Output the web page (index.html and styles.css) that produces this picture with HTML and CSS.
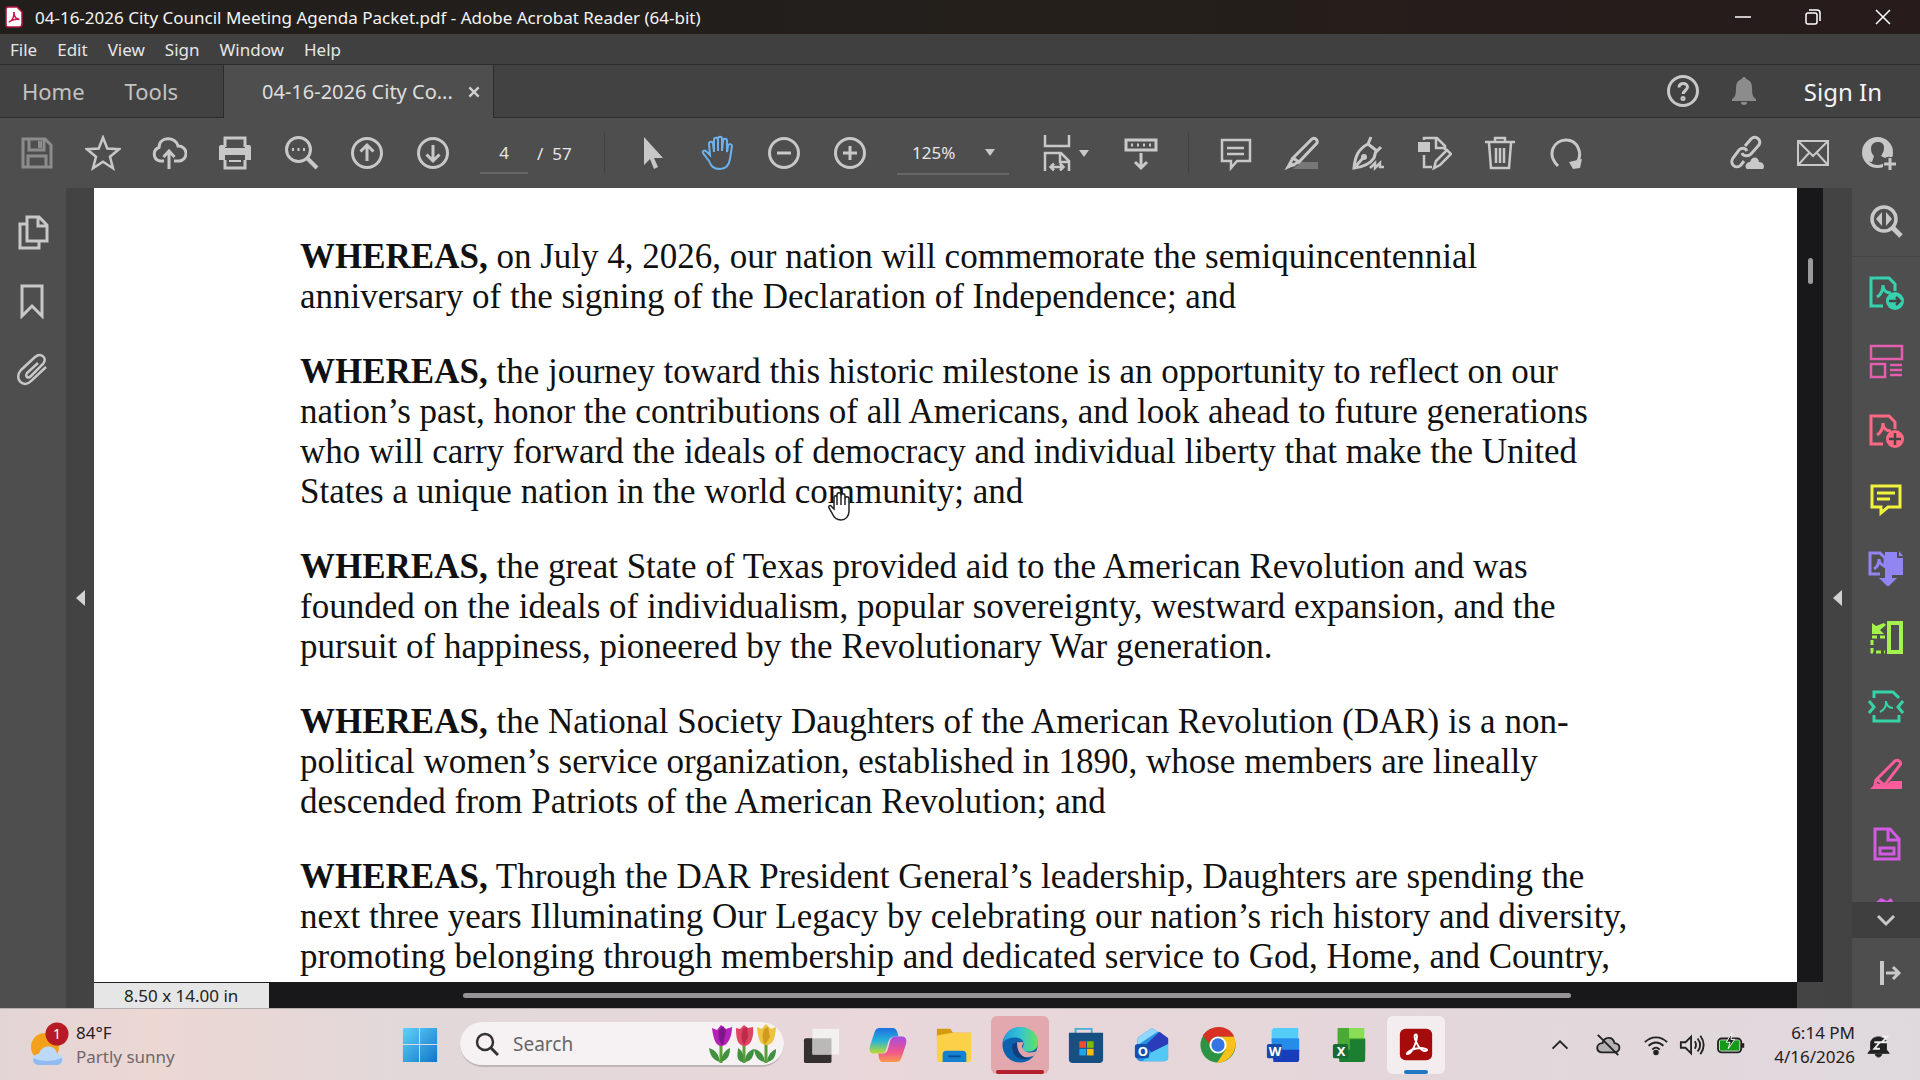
FILE: index.html
```html
<!DOCTYPE html>
<html lang="en">
<head>
<meta charset="utf-8">
<title>04-16-2026 City Council Meeting Agenda Packet.pdf</title>
<link rel="stylesheet" href="styles.css">
</head>
<body>
<header class="titlebar">
  <svg class="app-icon" viewBox="0 0 18 22"><path d="M3 1h9l5 5v12a3 3 0 0 1-3 3H3a2 2 0 0 1-2-2V3a2 2 0 0 1 2-2z" fill="#fff" stroke="#b3123c" stroke-width="1.5"/><path d="M4 16c3-1 5-5 5-10 0 5 2 7 5.500 7.500C10 12.500 7 13.500 4 16z" fill="none" stroke="#c8154a" stroke-width="1.500"/></svg>
  <h1 class="title">04-16-2026 City Council Meeting Agenda Packet.pdf - Adobe Acrobat Reader (64-bit)</h1>
  <div class="win-controls">
    <button class="win-btn" aria-label="Minimize"><svg viewBox="0 0 16 16"><path d="M0 8h16"/></svg></button>
    <button class="win-btn" aria-label="Restore"><svg viewBox="0 0 16 16"><rect x="1" y="4" width="11" height="11" rx="2"/><path d="M4 1h8a3 3 0 0 1 3 3v8"/></svg></button>
    <button class="win-btn" aria-label="Close"><svg viewBox="0 0 16 16"><path d="M1 1l14 14M15 1L1 15"/></svg></button>
  </div>
</header>
<nav class="menubar">
  <button>File</button><button>Edit</button><button>View</button><button>Sign</button><button>Window</button><button>Help</button>
</nav>
<div class="tabrow">
  <div class="tabs-left"><button class="tab-link">Home</button><button class="tab-link">Tools</button></div>
  <div class="tab-active"><span>04-16-2026 City Co...</span><button class="tab-close" aria-label="Close tab"><svg viewBox="0 0 12 12"><path d="M2 2l8 8M10 2l-8 8"/></svg></button></div>
  <div class="tabs-right">
    <button class="round" aria-label="Help"><svg class="ic" viewBox="0 0 36 36"><circle cx="18" cy="18" r="14.500"/><path d="M14 14.500c0-5.500 8.500-5 8.500-.5 0 3.500-4.300 3.500-4.300 7" stroke-width="3"/><circle cx="18" cy="25.500" r="1" /></svg></button>
    <button class="round dim" aria-label="Notifications"><svg class="ic" viewBox="0 0 36 36"><path class="f" d="M18 4a2 2 0 0 1 2 2c4 1 6 4 6 9 0 7 1 9 4 11v2H6v-2c3-2 4-4 4-11 0-5 2-8 6-9a2 2 0 0 1 2-2zM15 29h6a3 3 0 0 1-6 0z"/></svg></button>
    <button class="signin">Sign In</button>
  </div>
</div>
<div class="toolbar">
  <button class="tb dim" aria-label="Save"><svg class="ic" viewBox="0 0 36 36"><path d="M4 4h22l6 6v22H4zM10 4v11h15V4M9 32V21h18v11"/><path class="f" d="M19 6h4v7h-4z"/></svg></button>
  <button class="tb" aria-label="Star"><svg class="ic" viewBox="0 0 36 36"><path d="M18 2.500l4.300 11 11.700.7-9 7.500 3 11.500-10-6.500-10 6.500 3-11.500-9-7.500 11.700-.7z" stroke-width="2.500"/></svg></button>
  <button class="tb" aria-label="Upload"><svg class="ic" viewBox="0 0 36 36"><path d="M13 26H9a7 7 0 0 1-1-13.500C8 1 25 1 27 11a7.500 7.500 0 0 1 1 15h-5M18 34V17M12.500 22l5.500-6 5.500 6"/></svg></button>
  <button class="tb" aria-label="Print"><svg class="ic" viewBox="0 0 36 36"><path d="M8 12V3h20v9M8 25v8h20v-8" /><path class="f" fill-rule="evenodd" d="M4 10h4v3h20v-3h4a2 2 0 0 1 2 2v13H28v-5H8v5H2V12a2 2 0 0 1 2-2zM12 25h12v2H12z"/></svg></button>
  <button class="tb" aria-label="Find"><svg class="ic" viewBox="0 0 36 36"><circle cx="15.500" cy="14.500" r="12"/><path d="M24 23l10 10" stroke-width="4"/><path d="M9 14.500h2M14.500 14.500h2M20 14.500h2"/></svg></button>
  <button class="tb" aria-label="Previous page"><svg class="ic" viewBox="0 0 36 36"><circle cx="18" cy="18" r="14.500"/><path d="M18 26V11M11.500 16.500L18 10l6.500 6.500"/></svg></button>
  <button class="tb" aria-label="Next page"><svg class="ic" viewBox="0 0 36 36"><circle cx="18" cy="18" r="14.500"/><path d="M18 10v15M11.500 19.500L18 26l6.500-6.500"/></svg></button>
  <div class="pager"><input aria-label="Page number" value="4"><span>/&nbsp; 57</span></div>
  <i class="vsep"></i>
  <button class="tb" aria-label="Select"><svg class="ic" viewBox="0 0 36 36"><path class="f" d="M10 2v28l6-6 4 10 4-2-4-9h9z"/></svg></button>
  <button class="tb blue" aria-label="Hand"><svg class="ic" viewBox="0 0 36 36"><path d="M10 20L9 9c0-3 4-3 4 0l1 8V5c0-3 4-3 4 0v11V4c0-3 4-3 4 0v12l1-10c0-3 4-3 4 0v11l1-6c1-3 4-2 4 0l-2 13c-1 6-4 10-10 10-7 0-9-3-11-8L3 18c-1-3 2-3 4-1z" stroke-width="2"/></svg></button>
  <button class="tb" aria-label="Zoom out"><svg class="ic" viewBox="0 0 36 36"><circle cx="18" cy="18" r="14.500"/><path d="M11 18h14"/></svg></button>
  <button class="tb" aria-label="Zoom in"><svg class="ic" viewBox="0 0 36 36"><circle cx="18" cy="18" r="14.500"/><path d="M11 18h14M18 11v14"/></svg></button>
  <div class="zoombox"><select aria-label="Zoom level"><option>125%</option></select><i class="caret"></i></div>
  <button class="tb fit" aria-label="Page fit"><svg class="ic" viewBox="0 0 36 36"><path d="M6 0v11h24V0M6 36V18h16l8 8v10M21 18v9h9M12 32h12M15 28.500L11.500 32l3.500 3.500M21 28.500l3.500 3.500-3.500 3.500" stroke-width="2.500"/></svg><i class="caret"></i></button>
  <button class="tb" aria-label="Keyboard scroll"><svg class="ic" viewBox="0 0 36 36"><path d="M3 5h30v10H3zM18 18v15M12 27l6 6 6-6"/><path d="M8 10h2M14 10h2M20 10h2M26 10h2"/></svg></button>
  <i class="vsep"></i>
  <button class="tb" aria-label="Comment"><svg class="ic" viewBox="0 0 36 36"><path d="M4 5h28v21H19l-6 7v-7H4zM9 13h17M9 19h17" stroke-width="2.500"/></svg></button>
  <button class="tb" aria-label="Highlight"><svg class="ic" viewBox="0 0 36 36"><path class="shade" d="M17 27h17v7H9z"/><path d="M28 4c3-2 6 1 5 4L15 27l-6-4zM9 23l-5 9 11-5"/><path class="f" d="M2 33l5-6 5 4z"/></svg></button>
  <button class="tb" aria-label="Sign"><svg class="ic" viewBox="0 0 36 36"><path d="M21 2l-3 7 9 7 4-4M18 9C8 14 5 22 4 33c9-1 16-4 20-10l2-7M5 32l8-9"/><circle cx="14" cy="22" r="1.500"/><path d="M20 33l5-5v5l5-5v4h4" stroke-width="2.500"/></svg></button>
  <button class="tb" aria-label="Edit"><svg class="ic" viewBox="0 0 36 36"><path class="f" d="M2 7h12v10H2z"/><path d="M8 5V3h13l8 8v4M20 4v9h8M8 20v12h8M18 33l2-7 11-11 4 4-11 11z" stroke-width="2.500"/></svg></button>
  <button class="tb" aria-label="Delete"><svg class="ic" viewBox="0 0 36 36"><path d="M3 7h30M13 7V3h10v4M7 8l2 25h18l2-25M14 13v15M18 13v15M22 13v15" stroke-width="2.500"/></svg></button>
  <button class="tb" aria-label="Rotate"><svg class="ic" viewBox="0 0 36 36"><path d="M10 31C-2 19 6 5 18 5s17 14 11 23"/><path class="f" d="M21 27l13-3-2 9-7 1z"/></svg></button>
  <div class="tb-right">
    <button class="tb" aria-label="Share link"><svg class="ic" viewBox="0 0 36 36"><path d="M16 11l6-7c4-4 11 0 8 6l-8 9c-3 3-8 2-9-1M18 16c-2-4-6-3-8-1l-6 8c-4 6 3 12 8 7l3-4"/><path class="f" d="M18 34c-3-2-1-7 3-7 2-7 9-5 9 0 5 0 6 5 4 7z"/></svg></button>
    <button class="tb" aria-label="Email"><svg class="ic" viewBox="0 0 36 36"><path d="M3 6h30v24H3zM4 7l14 14L32 7M4 29l10-11M32 29L22 18" stroke-width="2"/></svg></button>
    <button class="tb" aria-label="Account"><svg class="ic" viewBox="0 0 36 36"><circle cx="16.500" cy="17.500" r="14"/><path class="f" d="M11 27l-6-1C0 15 5 3 16 3c13 0 16 10 14 18l-6 2-4-2c4-5 5-14-3-14-9 0-8 10-4 14z"/><path d="M29 22v13M22 29h13" stroke="#4e4e4e" stroke-width="7"/><path d="M29 23v12M23 29h12"/></svg></button>
  </div>
</div>
<main class="work">
  <aside class="leftpane">
    <button class="side" aria-label="Page thumbnails"><svg class="ic" viewBox="0 0 36 36"><path d="M12 3h12l8 8v16H12zM23 4v8h8M11 10H5v24h19v-6"/></svg></button>
    <button class="side" aria-label="Bookmarks"><svg class="ic" viewBox="0 0 36 36"><path d="M7 3h20v30l-10-10L7 33z"/></svg></button>
    <button class="side" aria-label="Attachments"><svg class="ic" viewBox="0 0 36 36"><path d="M23 11L12 21c-2 4 1 6 4 3l12-12c5-6-2-12-8-7L6 18C-2 27 9 37 16 29l15-14" stroke-width="2.500"/></svg></button>
  </aside>
  <button class="strip left" aria-label="Collapse navigation"><i class="tri"></i></button>
  <section class="viewer">
    <div class="row-top">
      <article class="page">
        <p><b>WHEREAS,</b> on July 4, 2026, our nation will commemorate the semiquincentennial<br>anniversary of the signing of the Declaration of Independence; and</p>
        <p><b>WHEREAS,</b> the journey toward this historic milestone is an opportunity to reflect on our<br>nation’s past, honor the contributions of all Americans, and look ahead to future generations<br>who will carry forward the ideals of democracy and individual liberty that make the United<br>States a unique nation in the world community; and</p>
        <p><b>WHEREAS,</b> the great State of Texas provided aid to the American Revolution and was<br>founded on the ideals of individualism, popular sovereignty, westward expansion, and the<br>pursuit of happiness, pioneered by the Revolutionary War generation.</p>
        <p><b>WHEREAS,</b> the National Society Daughters of the American Revolution (DAR) is a non-<br>political women’s service organization, established in 1890, whose members are lineally<br>descended from Patriots of the American Revolution; and</p>
        <p><b>WHEREAS,</b> Through the DAR President General’s leadership, Daughters are spending the<br>next three years Illuminating Our Legacy by celebrating our nation’s rich history and diversity,<br>promoting belonging through membership and dedicated service to God, Home, and Country,</p>
        <svg class="cursor" viewBox="0 0 24 30"><path d="M7 18V7c0-3 3-3 3 0v7V4c0-3 4-3 4 0v10V5c0-3 4-3 4 0v9-6c0-3 4-3 4 0v12c0 5-3 9-8 9-4 0-7-2-9-7l-3-5c-1-3 2-3 3-1z" fill="#fff" stroke="#222" stroke-width="1.500"/></svg>
      </article>
      <div class="vscroll"><i></i></div>
    </div>
    <div class="row-bottom"><span class="size">8.50 x 14.00 in</span><div class="hscroll"><i></i></div><div class="corner"></div></div>
  </section>
  <button class="strip right" aria-label="Collapse tools"><i class="tri"></i></button>
  <aside class="rightpane">
    <button class="side first" aria-label="Search tools"><svg class="ic" viewBox="0 0 36 36"><circle cx="16" cy="15" r="12" stroke-width="3.500"/><path d="M25 24l8 8" stroke-width="5"/><path class="f" d="M14 8v14l-6-7zM18 8v14l6-7z"/></svg></button>
    <div class="tools">
      <button class="side" aria-label="Export PDF"><svg class="ic c1" viewBox="0 0 36 36"><path d="M15 32H3V4h18l6 6v7M9 23c5-3 6-8 6-12 0 5 3 8 8 8"/><circle class="f" cx="27" cy="27" r="9"/><path d="M21 27h11M28 23l4 4-4 4" stroke="#444" stroke-width="2.500"/></svg></button>
      <button class="side" aria-label="Organize pages"><svg class="ic c2" viewBox="0 0 36 36"><path d="M3 3h31v13H3zM3 21h14v13H3zM22 22h12M22 27h12M22 32h12" stroke-width="2.500"/></svg></button>
      <button class="side" aria-label="Create PDF"><svg class="ic c3" viewBox="0 0 36 36"><path d="M15 32H3V4h18l6 6v7M9 23c5-3 6-8 6-12 0 5 3 8 8 8"/><circle class="f" cx="27" cy="27" r="9"/><path d="M21 27h12M27 21v12" stroke="#444" stroke-width="2.500"/></svg></button>
      <button class="side" aria-label="Comment tool"><svg class="ic c4" viewBox="0 0 36 36"><path d="M4 5h28v21H20l-7 6v-6H4zM9 12h18M9 18h13"/></svg></button>
      <button class="side" aria-label="Combine files"><svg class="ic c5" viewBox="0 0 36 36"><path class="f" d="M17 2h12v6h6v17H24v3h5l-9 9-9-9h6zM31 1l4 5h-4z"/><path d="M12 24H2V3h10l5 5v10M6 19c5-3 5-7 5-10 0 4 2 6 6 7"/></svg></button>
      <button class="side" aria-label="Rotate pages"><svg class="ic c6" viewBox="0 0 36 36"><path d="M21 4h12v29H21z" stroke-width="4"/><path d="M17 18H4v15h13" stroke-dasharray="5 3"/><path class="f" d="M4 4l4 3 8-3 2 2-6 5 4 4-12 0z"/></svg></button>
      <button class="side" aria-label="Compress PDF"><svg class="ic c7" viewBox="0 0 36 36"><path d="M6 10V4h19l6 6M6 27v6h25v-6M1 13l5 6-5 6M35 13l-5 6 5 6"/><path d="M12 24c6-3 6-7 6-11 0 4 3 7 7 7" stroke-width="2"/></svg></button>
      <button class="side" aria-label="Redact"><svg class="ic c8" viewBox="0 0 36 36"><path d="M27 4c3-2 7 1 5 4L16 29l-9-1 1-5zM9 22l7 6"/><path class="f" d="M3 31l5-5 9 3 6-5h11v8H2z"/></svg></button>
      <button class="side" aria-label="Prepare form"><svg class="ic c9" viewBox="0 0 36 36"><path d="M7 3h15l9 10v20H7zM20 4v10h10M12 22h14v6H12z"/></svg></button>
      <button class="side" aria-label="More tools"><svg class="ic c9" viewBox="0 0 36 36"><path class="f" d="M7 8l6-5 6 3 4-3 4 7-6 14z"/></svg></button>
    </div>
    <button class="more" aria-label="Scroll down"><svg class="ic" viewBox="0 0 36 36"><path d="M10 14l8 8 8-8"/></svg></button>
    <button class="side exit" aria-label="Open pane"><svg class="ic" viewBox="0 0 36 36"><path d="M14 6v24" stroke-width="4"/><path d="M18 18h13M25 12l6 6-6 6"/></svg></button>
  </aside>
</main>
<footer class="taskbar">
  <div class="weather">
    <svg class="w-icon" viewBox="0 0 40 46"><circle cx="15" cy="26" r="14" fill="#f3a01d"/><path d="M9 44c-9-1-8-11 0-11 2-10 17-10 18 0 8 0 8 10 0 11z" fill="#bcd9f7"/><path d="M9 44c-5 0-7-4-5-7 6 4 18 4 28 0 0 5-2 7-5 7z" fill="#90baf0"/><circle cx="27" cy="13" r="11.500" fill="#b51a25"/></svg>
    <span class="badge">1</span>
    <div class="w-text"><span>84°F</span><span class="muted">Partly sunny</span></div>
  </div>
  <div class="apps">
    <button class="app" aria-label="Start"><svg viewBox="0 0 40 40"><defs><linearGradient id="gw" x2="1" y2="1"><stop stop-color="#5fd2fa"/><stop offset="1" stop-color="#0f76c9"/></linearGradient></defs><path fill="url(#gw)" d="M3 2h16v17H2V3zM20 2h18v17H20zM2 20h17v18H2zM20 20h18v18H20z"/></svg></button>
    <label class="search"><svg class="mag" viewBox="0 0 24 24"><circle cx="10" cy="10" r="8" fill="none" stroke="#333" stroke-width="2.500"/><path d="M16 16l7 7" stroke="#333" stroke-width="3"/></svg><input placeholder="Search" aria-label="Search">
      <svg class="tulips" viewBox="0 0 70 40"><g fill="none" stroke="#5d9c38" stroke-width="3"><path d="M13 20v19M36 20v19M58 20v19"/></g><path fill="#3f9140" d="M12 38C4 36 2 30 1 24c7 2 10 7 11 14zM13 38c1-9 5-12 9-14 0 7-2 12-9 14zM35 38c-8-1-5-9-5-14 5 3 6 8 5 14zM37 38c0-7 3-11 9-13 0 8-3 12-9 13zM57 38c-7-1-10-6-11-13 6 1 10 6 11 13zM59 38c1-8 5-11 9-13 0 8-3 12-9 13z"/><path fill="#b720b5" d="M4 4l5 2 4-5 5 4 6-2c0 8-3 19-11 19C7 22 5 12 4 4z"/><path fill="#7e168c" d="M11 6l4-4 3 5-3 14c-4-2-5-8-4-15z"/><path fill="#df4563" d="M28 4l4 1 4-4 4 3 5-1c1 8-1 18-8 19-8 0-9-9-9-18z"/><path fill="#bd2a4c" d="M35 5l4-2 1 10-4 8c-3-5-3-10-1-16z"/><path fill="#ecc33e" d="M49 3l5 2 4-5 5 5 5-2c-1 10-2 18-10 18-7 0-8-9-9-18z"/><path fill="#d19c1d" d="M56 5l4-2 2 10-5 8c-3-5-3-10-1-16z"/></svg></label>
    <button class="app" aria-label="Task view"><svg viewBox="0 0 40 40"><rect x="1" y="13" width="29" height="26" rx="2" fill="#33302e"/><path d="M10 3h28v27H10z" fill="#f3f1f0"/><path d="M10 13h20v17H10z" fill="#bbb9b8"/></svg></button>
    <button class="app" aria-label="Copilot"><svg viewBox="0 0 40 40"><defs><linearGradient id="ga" x2="0" y2="1"><stop stop-color="#1e6fe0"/><stop offset=".5" stop-color="#27b2d8"/><stop offset="1" stop-color="#bfdb2c"/></linearGradient><linearGradient id="gb" x2="0" y2="1"><stop stop-color="#a54be0"/><stop offset=".6" stop-color="#f0558d"/><stop offset="1" stop-color="#f99a4c"/></linearGradient></defs><path fill="url(#ga)" d="M11 2h14c4 0 5 4 6 9h-4c-4 0-6 3-7 7l-2 7c-1 3-3 4-6 4H5c-4 0-5-4-4-8L6 6c1-3 3-4 5-4z"/><path fill="url(#gb)" d="M29 38H15c-4 0-5-4-5-9h4c4 0 5-2 6-5l2-8c1-3 3-5 6-5h7c4 0 5 4 4 8l-5 15c-1 3-3 4-5 4z"/></svg></button>
    <button class="app" aria-label="File Explorer"><svg viewBox="0 0 40 40"><path fill="#d69a11" d="M2 3h14l3 4h18v8H2z"/><path fill="#fdd04a" d="M2 10l16-3h20v28a3 3 0 0 1-3 3H4a2 2 0 0 1-2-2z"/><path fill="#1580cf" d="M8 38V30a4 4 0 0 1 4-4h17a4 4 0 0 1 4 4v8z"/><path stroke="#0a4e94" stroke-width="2" d="M14 32h13"/></svg></button>
    <button class="app on edge" aria-label="Edge"><svg viewBox="0 0 40 40"><defs><linearGradient id="ge" x2="1"><stop stop-color="#1e9de0"/><stop offset=".5" stop-color="#35c3d2"/><stop offset="1" stop-color="#63e35b"/></linearGradient></defs><circle cx="20" cy="20" r="18.500" fill="#0d62ad"/><path fill="url(#ge)" d="M2 17C5 5 12 1 20 1c12 0 19 8 19 16 0 7-5 10-11 10-5 0-6-3-5-5 3-5-1-10-8-10-6 0-10 2-13 5z"/><path d="M17 17c-5 10 4 20 18 14l4-6c-3 4-16 5-17-4l2-4z" fill="#e0a3a9"/><path d="M12 19c-2 12 8 20 21 14-9 3-17-5-16-16z" fill="#123f7b"/></svg></button>
    <button class="app" aria-label="Store"><svg viewBox="0 0 40 40"><path d="M9 8V3h17v5" fill="none" stroke="#49aed8" stroke-width="2"/><path fill="#174f80" d="M2 7h36v28a4 4 0 0 1-4 4H6a4 4 0 0 1-4-4z"/><path fill="#ee4e28" d="M13 16h7v7h-7z"/><path fill="#7fba00" d="M21 16h7v7h-7z"/><path fill="#1fa5ee" d="M13 24h7v7h-7z"/><path fill="#ffba08" d="M21 24h7v7h-7z"/></svg></button>
    <button class="app" aria-label="Outlook"><svg viewBox="0 0 40 40"><path fill="#2394e4" d="M5 12L20 2l17 11v20a4 4 0 0 1-4 4H8a4 4 0 0 1-4-4z"/><path fill="#8fd8fa" d="M5 12L20 2l6 4L5 20z"/><path fill="#2b3cba" d="M28 6l9 7v6L20 28l-8-7z"/><path fill="#53c8f4" d="M19 28l18-9v14a4 4 0 0 1-4 4H10z"/><rect x="2" y="19" width="15" height="15" rx="3" fill="#154fae"/></svg><b class="letter">O</b></button>
    <button class="app" aria-label="Chrome"><svg viewBox="0 0 40 40"><circle cx="20" cy="20" r="18.500" fill="#2d9344"/><path fill="#fbc116" d="M20 11h17c5 14-5 28-18 28l9-14z"/><path fill="#d93025" d="M4 10C13-3 32-1 37 11H20c-5 0-8 3-9 8z"/><circle cx="20" cy="20" r="9" fill="#fff"/><circle cx="20" cy="20" r="7" fill="#3574e3"/></svg></button>
    <button class="app" aria-label="Word"><svg viewBox="0 0 40 40"><path fill="#53cdf7" d="M9 2h26v14H7V5z"/><path fill="#258de9" d="M7 13h29v14H7z"/><path fill="#173dbb" d="M7 25h29v10a3 3 0 0 1-3 3H9z"/><rect x="2" y="19" width="16" height="15" rx="2" fill="#1848a8"/></svg><b class="letter">W</b></button>
    <button class="app" aria-label="Excel"><svg viewBox="0 0 40 40"><path fill="#88df56" d="M9 2h26v14H7V5z"/><path fill="#4aaa35" d="M7 13h29v14H7zM7 2h12v14H7z"/><path fill="#1b7e30" d="M7 25h29v10a3 3 0 0 1-3 3H9zM20 14h16v12H20z"/><rect x="2" y="19" width="16" height="15" rx="2" fill="#176b35"/></svg><b class="letter">X</b></button>
    <button class="app on acro" aria-label="Acrobat"><svg viewBox="0 0 40 40"><rect x="3" y="3" width="34" height="33" rx="6" fill="#a60b0b"/><path d="M20 9c-4 0 1 12 6 16 4 3 8 0 4-1-6-2-14 0-18 3-4 3 0 4 3 0 4-5 8-18 5-18z" fill="none" stroke="#fff" stroke-width="2"/></svg></button>
  </div>
  <div class="tray">
    <button aria-label="Hidden icons"><svg class="t16" viewBox="0 0 28 28"><path d="M6 18l8-8 8 8"/></svg></button>
    <button class="wide" aria-label="OneDrive"><svg viewBox="0 0 28 28"><path fill="#b5b2b3" d="M8 22c-8 0-7-10 0-10 2-7 11-8 13 0 8 1 6 10 0 10z"/><path d="M3 3l22 22"/></svg></button>
    <button aria-label="Wi-Fi"><svg viewBox="0 0 28 28"><path d="M2 11c7-7 17-7 24 0M6 15c5-5 11-5 16 0M10 19c3-3 5-3 8 0"/><circle cx="14" cy="22" r="2" fill="#222"/></svg></button>
    <button aria-label="Volume"><svg viewBox="0 0 28 28"><path d="M2 11h5l6-6v18l-6-6H2zM17 10c2 3 2 5 0 8M20 7c4 5 4 9 0 14M23 4c5 7 5 13 0 20"/></svg></button>
    <button class="bat" aria-label="Battery"><svg viewBox="0 0 32 28"><rect x="2" y="7" width="25" height="15" rx="4"/><path fill="#159b18" stroke="none" d="M4 9h21v11H4z"/><path d="M29 12v5" stroke-width="2.500"/><path d="M17 1l-6 10h4l-2 7 7-10h-4z" fill="#222" stroke="#fff" stroke-width="1"/></svg></button>
    <div class="clock"><span>6:14 PM</span><span>4/16/2026</span></div>
    <button class="bell" aria-label="Do not disturb"><svg viewBox="0 0 28 28"><path d="M5 19V12c0-9 17-9 17 0v7l3 4H2zM10 24h7c-1 4-6 4-7 0z" fill="#222" stroke-width="1"/><path d="M9 11h6l-6 7h6M17 5h6l-6 6h6" stroke="#eee"/></svg></button>
  </div>
</footer>
</body>
</html>
```
FILE: styles.css
```css
* { box-sizing: border-box; }
body {
  margin: 0;
  height: 100vh;
  display: flex;
  flex-direction: column;
  overflow: hidden;
  font-family: "Noto Sans", "Open Sans", sans-serif;
  font-size: 17px;
  color: #e6e6e6;
  background: #444;
}
button, input, select {
  font: inherit;
  color: inherit;
  background: none;
  border: 0;
  padding: 0;
  margin: 0;
}
svg { display: block; flex: none; }

.titlebar {
  height: 34px;
  display: flex;
  align-items: center;
  padding: 0 2px 0 5px;
  gap: 12px;
  background: linear-gradient(90deg, #211e1c, #241f1b 60%, #271b1b);
}
.app-icon { width: 18px; height: 24px; }
.title { margin: 0; font-size: 17px; font-weight: 400; color: #f4f4f4; }
.win-controls { margin-left: auto; display: flex; }
.win-btn { width: 70px; height: 34px; display: grid; place-items: center; }
.win-btn svg { width: 16px; height: 16px; fill: none; stroke: #fff; stroke-width: 1.500; }

.menubar {
  height: 31px;
  display: flex;
  align-items: center;
  gap: 20px;
  padding: 0 10px;
  background: #404040;
  border-bottom: 1px solid #2c2c2c;
}

.tabrow { height: 53px; display: flex; background: #424242; font-size: 20px; }
.tabs-left {
  width: 224px;
  display: flex;
  align-items: center;
  gap: 40px;
  padding-left: 22px;
  font-size: 22px;
  color: #c2c2c2;
  border-right: 1px solid #2c2c2c;
  border-bottom: 1px solid #2c2c2c;
}
.tab-active {
  width: 270px;
  display: flex;
  align-items: center;
  justify-content: space-between;
  padding: 0 12px 0 38px;
  background: #4e4e4e;
  color: #dedede;
  border-right: 1px solid #2c2c2c;
}
.tab-close svg { width: 14px; height: 14px; fill: none; stroke: #d0d0d0; stroke-width: 2; }
.tabs-right {
  flex: 1;
  display: flex;
  align-items: center;
  justify-content: flex-end;
  padding-right: 38px;
  border-bottom: 1px solid #2c2c2c;
}
.round { width: 61px; display: grid; place-items: center; }
.signin { margin-left: 29px; color: #f4f4f4; font-size: 24px; }

.ic { width: 36px; height: 36px; fill: none; stroke: #c8c8c8; stroke-width: 3; }
.ic .f { fill: #c8c8c8; stroke: none; }
.ic .shade { fill: #777; stroke: none; }
.dim .ic { stroke: #8c8c8c; }
.dim .ic .f { fill: #8c8c8c; }
.blue .ic { stroke: #6cb2ee; }

.toolbar { height: 70px; display: flex; align-items: center; padding: 0 8px 0 4px; background: #4e4e4e; }
.tb { width: 66px; height: 60px; display: flex; align-items: center; justify-content: center; flex: none; }
.pager { width: 124px; margin-left: 14px; display: flex; align-items: center; gap: 9px; }
.pager input { width: 48px; height: 42px; text-align: center; border-bottom: 2px solid #666; }
.vsep { width: 1px; height: 40px; background: #414141; margin-right: 14px; }
.zoombox { width: 112px; margin: 0 18px 0 14px; display: flex; align-items: center; border-bottom: 2px solid #666; }
.zoombox select { appearance: none; width: 88px; height: 42px; padding-left: 15px; }
.caret { border: 5px solid transparent; border-top: 7px solid #c8c8c8; border-bottom: 0; }
.fit { width: 74px; gap: 4px; }
.fit + .tb { margin-right: 14px; margin-left: 7px; }
.tb-right { margin-left: auto; display: flex; }

.work { flex: 1; min-height: 0; display: flex; }
.leftpane { width: 66px; padding-top: 9px; background: #4e4e4e; }
.side { width: 100%; height: 69px; display: grid; place-items: center; flex: none; }
.strip { width: 28px; background: #434343; display: grid; place-items: center; }
.strip.right { width: 29px; }
.tri { border: 8px solid transparent; border-right: 9px solid #d2d2d2; border-left: 0; }

.viewer { flex: 1; min-width: 0; display: flex; flex-direction: column; }
.row-top { flex: 1; min-height: 0; display: flex; }
.page {
  position: relative;
  flex: 1;
  overflow: hidden;
  padding: 49px 0 0 206px;
  background: #fff;
  color: #111;
  font-family: "Liberation Serif", serif;
  font-size: 35px;
  line-height: 40px;
  white-space: nowrap;
}
.page p { margin: 0 0 35px; }
.cursor { position: absolute; left: 733px; top: 303px; width: 24px; height: 30px; }
.vscroll { width: 26px; padding: 70px 0 0 11px; background: #18171a; }
.vscroll i { display: block; width: 5px; height: 26px; border-radius: 3px; background: #9a9a9a; }
.row-bottom { height: 26px; display: flex; color: #222; }
.size { width: 175px; line-height: 26px; padding-left: 30px; background: #e6e6e6; border-top: 1px solid #222; }
.hscroll { flex: 1; background: #18171a; display: flex; align-items: center; padding: 0 226px 0 194px; }
.hscroll i { flex: 1; height: 5px; border-radius: 3px; background: #969497; }
.corner { width: 26px; background: #444; }

.rightpane { width: 68px; display: flex; flex-direction: column; background: #4e4e4e; }
.first { border-bottom: 1px solid #454545; }
.tools { flex: 1; min-height: 0; overflow: hidden; }
.more { height: 36px; display: grid; place-items: center; background: #3f3f3f; }
.exit { height: 70px; }
.c1 { stroke: #36d2b0; } .c1 .f { fill: #36d2b0; }
.c2 { stroke: #e45fb0; }
.c3 { stroke: #fb6a82; } .c3 .f { fill: #fb6a82; }
.c4 { stroke: #f0f23c; }
.c5 { stroke: #9184f3; } .c5 .f { fill: #9184f3; }
.c6 { stroke: #a4f24c; } .c6 .f { fill: #a4f24c; }
.c7 { stroke: #36d2a8; }
.c8 { stroke: #f95d9c; } .c8 .f { fill: #f95d9c; }
.c9 { stroke: #d35be4; } .c9 .f { fill: #d35be4; }

.taskbar {
  height: 72px;
  display: flex;
  align-items: center;
  color: #242022;
  background: linear-gradient(90deg, #e3d5d6, #ecd7d3 8%, #e1d8da 22%, #e9d7da 45%, #e4d6da 70%, #dfd9dd);
  border-top: 1px solid #b7aeb0;
}
.weather { position: relative; width: 387px; padding-left: 30px; display: flex; gap: 6px; }
.w-icon { width: 40px; height: 46px; }
.badge { position: absolute; left: 53px; top: 3px; font-size: 14px; line-height: 20px; color: #fff; }
.w-text { display: flex; flex-direction: column; line-height: 24px; }
.muted { color: #70676a; }
.apps { display: flex; align-items: center; }
.app { position: relative; width: 66px; height: 58px; display: grid; place-items: center; border-radius: 6px; }
.app svg { width: 38px; height: 38px; }
.letter { position: absolute; left: 16px; top: 26px; width: 16px; text-align: center; font-size: 13px; line-height: 18px; color: #fff; }
.search {
  width: 324px;
  height: 45px;
  margin: 0 5px 0 7px;
  padding: 0 6px 0 15px;
  display: flex;
  align-items: center;
  gap: 14px;
  border-radius: 23px;
  background: #f6f1f2;
  border-bottom: 2px solid #bdb5b7;
}
.mag { width: 24px; height: 24px; }
.search input { flex: 1; min-width: 0; font-size: 19px; }
.search input::placeholder { color: #666; opacity: 1; }
.tulips { width: 70px; height: 40px; }
.on { width: 58px; margin: 0 4px; }
.edge { background: #e3a8ad; }
.acro { background: #f4edef; }
.on::after { content: ""; position: absolute; bottom: 0; width: 48px; height: 4px; border-radius: 2px; background: #b5202f; }
.acro::after { width: 24px; background: #2078c4; }
.tray { margin-left: auto; padding-right: 28px; display: flex; align-items: center; }
.tray button { width: 36px; display: grid; place-items: center; }
.tray svg { width: 26px; height: 26px; fill: none; stroke: #222; stroke-width: 2; }
.tray .wide { width: 60px; }
.tray .bat { width: 42px; }
.tray .bat svg { width: 32px; }
.clock { width: 103px; display: flex; flex-direction: column; text-align: right; line-height: 24px; }
.tray .bell { width: 26px; margin-left: 11px; }
```
